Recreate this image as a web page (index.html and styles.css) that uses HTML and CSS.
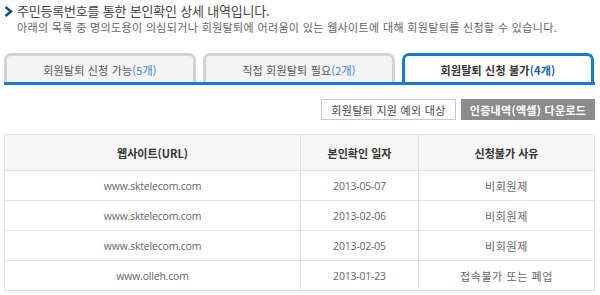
FILE: index.html
```html
<!DOCTYPE html>
<html lang="ko">
<head>
<meta charset="utf-8">
<link rel="stylesheet" href="styles.css">
</head>
<body>
<div class="page">
  <h2 class="title"><svg class="arrow" width="9" height="11" viewBox="0 0 9 11"><path d="M1.5 1 L7 5.5 L1.5 10" fill="none" stroke="#1a4f8c" stroke-width="2.6"/></svg>주민등록번호를 통한 본인확인 상세 내역입니다.</h2>
  <p class="desc">아래의 목록 중 명의도용이 의심되거나 회원탈퇴에 어려움이 있는 웹사이트에 대해 회원탈퇴를 신청할 수 있습니다.</p>
  <div class="tabs">
    <div class="tab">회원탈퇴 신청 가능<span class="cnt">(5개)</span></div>
    <div class="tab">직접 회원탈퇴 필요<span class="cnt">(2개)</span></div>
    <div class="tab active">회원탈퇴 신청 불가<span class="cnt">(4개)</span></div>
  </div>
  <div class="actions">
    <button class="btn">회원탈퇴 지원 예외 대상</button>
    <button class="btn dark">인증내역(엑셀) 다운로드</button>
  </div>
  <table class="list">
    <colgroup><col class="c1"><col class="c2"><col class="c3"></colgroup>
    <thead>
      <tr><th>웹사이트(URL)</th><th>본인확인 일자</th><th>신청불가 사유</th></tr>
    </thead>
    <tbody>
      <tr><td>www.sktelecom.com</td><td>2013-05-07</td><td class="reason">비회원제</td></tr>
      <tr><td>www.sktelecom.com</td><td>2013-02-06</td><td class="reason">비회원제</td></tr>
      <tr><td>www.sktelecom.com</td><td>2013-02-05</td><td class="reason">비회원제</td></tr>
      <tr><td>www.olleh.com</td><td>2013-01-23</td><td class="reason">접속불가 또는 폐업</td></tr>
    </tbody>
  </table>
</div>
</body>
</html>
```
FILE: styles.css
```css
* { box-sizing: border-box; }
body {
  margin: 0;
  background: #fff;
  font-family: "Noto Sans CJK KR", "Noto Sans", sans-serif;
  color: #555;
}
.page {
  width: 600px;
  padding: 3px 5px 0 4px;
}
.title {
  margin: 0;
  display: flex;
  align-items: center;
  gap: 4px;
  font-size: 13px;
  font-weight: 400;
  color: #444;
  letter-spacing: -0.2px;
  line-height: 16px;
}
.arrow { flex: none; }
.desc {
  margin: 0;
  padding-left: 13px;
  font-size: 11px;
  line-height: 16px;
  color: #666;
  letter-spacing: 0.35px;
}
.tabs {
  margin-top: 18px;
  display: grid;
  grid-template-columns: 192px 192px 192px;
  column-gap: 7px;
  border-bottom: 3px solid #1a78cf;
  height: 32px;
}
.tab {
  border: 3px solid #d2d2d2;
  border-bottom: 0;
  border-radius: 7px 7px 0 0;
  background: #f3f3f3;
  display: flex;
  align-items: center;
  justify-content: center;
  font-size: 11px;
  color: #555;
  padding-top: 2px;
  letter-spacing: 0.2px;
}
.tab.active {
  border-color: #1a78cf;
  background: #fff;
  color: #333;
  font-weight: 700;
}
.cnt { color: #3a7fd0; }
.tab.active .cnt { color: #1a5fb4; }
.actions {
  margin-top: 14px;
  display: flex;
  justify-content: flex-end;
  gap: 5px;
}
.btn {
  height: 21px;
  width: 135px;
  border: 1px solid #c9c9c9;
  background: #fff;
  color: #444;
  font-family: inherit;
  font-size: 11px;
  padding: 0;
  letter-spacing: 0.3px;
}
.btn.dark {
  width: 134px;
  background: #8b8b8b;
  border-color: #8b8b8b;
  color: #fff;
  font-weight: 700;
}
.list {
  margin-top: 14px;
  width: 591px;
  border-collapse: collapse;
  border: 1px solid #e3e3e3;
  font-size: 11px;
}
.c1 { width: 296px; }
.c2 { width: 118px; }
.list th, .list td {
  border: 1px solid #e3e3e3;
  text-align: center;
}
.list th {
  height: 36px;
  background: #f6f6f6;
  color: #333;
  font-weight: 700;
  font-size: 11px;
}
.list td {
  height: 30px;
  color: #666;
  font-weight: 400;
  font-family: "Open Sans", "Noto Sans CJK KR", sans-serif;
  font-size: 10.5px;
  letter-spacing: -0.2px;
}
.list td.reason {
  font-family: "Noto Sans CJK KR", sans-serif;
  font-size: 11px;
  letter-spacing: 0.6px;
}
```
